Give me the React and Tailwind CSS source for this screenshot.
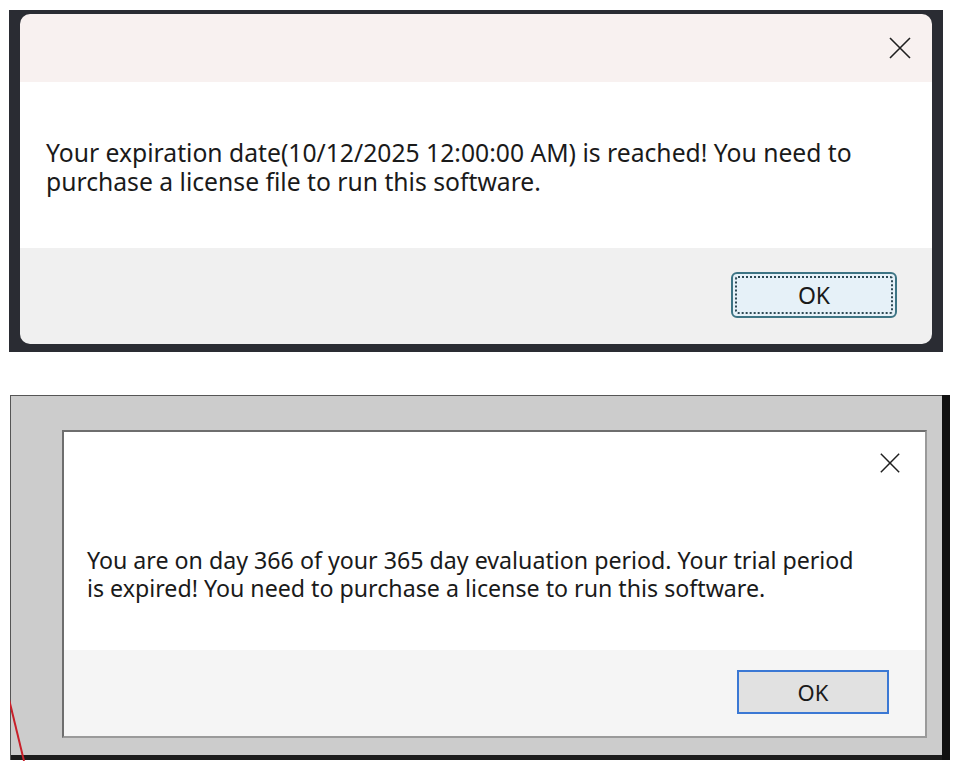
import React from 'react';

const font = { fontFamily: '"Noto Sans", "Open Sans", sans-serif' };

function CloseIcon({ size = 24 }) {
  return (
    <svg width={size} height={size} viewBox="0 0 24 24" fill="none" stroke="#1f1f1f" strokeWidth="1.6">
      <path d="M2 2 L22 22 M22 2 L2 22" />
    </svg>
  );
}

function ModernDialog() {
  return (
    <div className="ml-[9px] mt-[10px] w-[934px] h-[342px] bg-[#2a2c33] pt-[4px] pl-[11px] pr-[11px] pb-[8px]">
      <div className="h-full rounded-[10px] overflow-hidden flex flex-col">
        <div className="h-[68px] bg-[#f8f1f0] flex justify-end items-start pt-[22px] pr-[20px]">
          <CloseIcon size={24} />
        </div>
        <div className="h-[166px] bg-white pt-[56px] pl-[26px]">
          <p className="text-[24.7px] leading-[29px] text-[#1a1a1a] whitespace-nowrap" style={font}>
            Your expiration date(10/12/2025 12:00:00 AM) is reached! You need to
            <br />
            purchase a license file to run this software.
          </p>
        </div>
        <div className="flex-1 bg-[#f0f0f0] flex justify-end items-start pt-[24px] pr-[35px]">
          <button className="w-[166px] h-[46px] rounded-[6px] border-2 border-[#3d7484] bg-[#e6f1f8] p-[2px]">
            <div className="h-full w-full rounded-[3px] border-2 border-dotted border-[#2e4a55] flex items-center justify-center text-[23px] text-[#1a1a1a]" style={font}>
              OK
            </div>
          </button>
        </div>
      </div>
    </div>
  );
}

function ClassicDialog() {
  return (
    <div className="relative ml-[10px] mt-[43px] w-[940px] h-[365px] flex">
      <div className="w-[932px] h-full flex flex-col bg-[#cccccc] border-t border-l border-[#555555]">
        <div className="flex-1 pt-[34px] pl-[51px] pr-[15px] pb-[17px]">
          <div className="h-full border-2 border-[#6e6e6e] border-r-[#9a9a9a] border-b-[#9a9a9a] flex flex-col">
            <div className="h-[218px] bg-white relative">
              <div className="absolute right-[24px] top-[20px]">
                <CloseIcon size={22} />
              </div>
              <p className="pt-[114px] pl-[23px] text-[23.2px] leading-[28px] text-[#1a1a1a] whitespace-nowrap" style={font}>
                You are on day 366 of your 365 day evaluation period. Your trial period
                <br />
                is expired! You need to purchase a license to run this software.
              </p>
            </div>
            <div className="flex-1 bg-[#f5f5f5] flex justify-end items-start pt-[20px] pr-[36px]">
              <button className="w-[152px] h-[44px] border-2 border-[#3b78d4] bg-[#e1e1e1] flex items-center justify-center text-[22px] text-[#1a1a1a]" style={font}>
                OK
              </button>
            </div>
          </div>
        </div>
        <div className="h-[5px] bg-[#1c1c1c]" />
      </div>
      <div className="w-[8px] h-full bg-[#111111]" />
      <svg className="absolute left-0 top-[300px]" width="30" height="66" viewBox="0 0 30 66">
        <path d="M-2 0 L14 66" stroke="#c8202a" strokeWidth="2" />
      </svg>
    </div>
  );
}

export default function App() {
  return (
    <div className="w-[960px] h-[775px] bg-white overflow-hidden">
      <ModernDialog />
      <ClassicDialog />
    </div>
  );
}
